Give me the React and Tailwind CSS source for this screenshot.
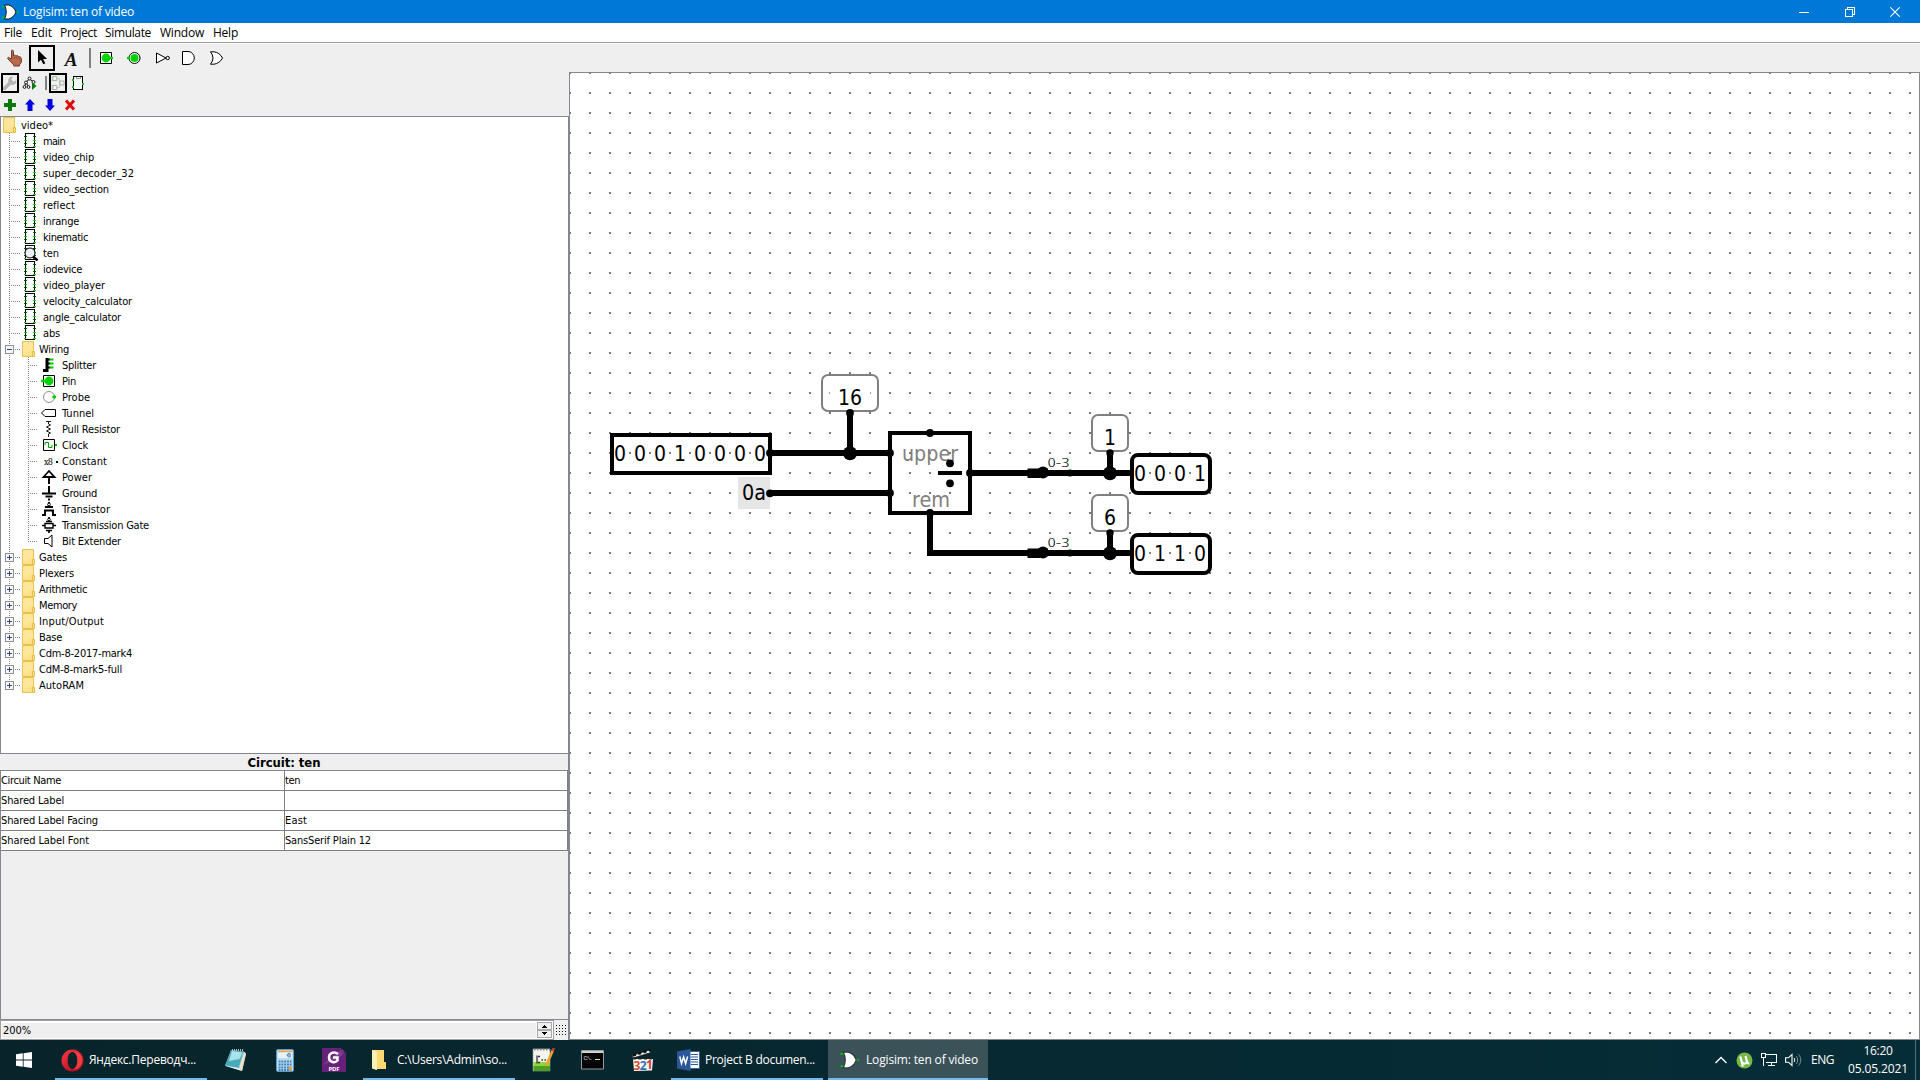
import React, { useLayoutEffect, useRef } from 'react';

const TAHOMA = "font-['DejaVu_Sans_Condensed','DejaVu_Sans',sans-serif] [font-stretch:condensed]";
const SEGOE = "font-['Open_Sans','Noto_Sans',sans-serif] font-medium";

// Text whose letter spacing is adjusted so that it takes the given width.
function Fit({ w, children, className = '' }) {
  const ref = useRef(null);
  useLayoutEffect(() => {
    const el = ref.current;
    el.style.letterSpacing = '0px';
    const natural = el.getBoundingClientRect().width;
    el.style.letterSpacing = `${(w - natural) / String(children).length}px`;
  }, [w, children]);
  return (
    <span ref={ref} className={`inline-block shrink-0 whitespace-pre ${className}`}>
      {children}
    </span>
  );
}

function Ico({ w, h, children, className = '', crisp }) {
  return (
    <svg width={w} height={h} viewBox={`0 0 ${w} ${h}`} fill="none" shapeRendering={crisp ? 'crispEdges' : 'auto'} className={`block shrink-0 ${className}`}>
      {children}
    </svg>
  );
}

/* ---------- title and menu ---------- */

function LogisimMark({ w = 18, h = 16, outline = '#111' }) {
  return (
    <svg width={w} height={h} viewBox="0 0 18 16" fill="none" className="block shrink-0">
      <path d="M1 2.500h4M1 13.500h4M14 8h3.500" stroke="#00c800" strokeWidth="1.500" />
      <path d="M3.500 1H7.500C11 1.600 13.600 4.400 15 8C13.600 11.600 11 14.400 7.500 15H3.500C5.800 10.500 5.800 5.500 3.500 1Z" fill="#fff" stroke={outline} strokeWidth="1" />
    </svg>
  );
}

function TitleBar() {
  return (
    <header className={`flex h-[23px] shrink-0 items-center bg-[#0078d7] text-white ${SEGOE}`}>
      <div className="ml-px flex w-[22px]"><LogisimMark /></div>
      <Fit w={111} className="pt-px text-[12px] leading-[22px]">Logisim: ten of video</Fit>
      <div className="ml-auto flex h-full items-center">
        <div className="flex w-[46px] justify-center"><Ico w={10} h={10} crisp><path d="M0 5.500h10" stroke="#fff" /></Ico></div>
        <div className="flex w-[45px] justify-center"><Ico w={10} h={10} crisp><path d="M.5 2.500h7v7h-7zM2.500 2V.5h7v7H8" stroke="#fff" /></Ico></div>
        <div className="mr-[2px] flex w-[46px] justify-center"><Ico w={10} h={10}><path d="M.3.3l9.400 9.400M9.700.3L.3 9.700" stroke="#fff" strokeWidth="1.100" /></Ico></div>
      </div>
    </header>
  );
}

const MENUS = [['File', 18, 27], ['Edit', 21, 29], ['Project', 37, 45], ['Simulate', 46, 55], ['Window', 44, 53], ['Help', 25, 30]];

function MenuBar() {
  return (
    <nav className={`flex h-[20px] shrink-0 items-center border-b border-[#a0a0a0] bg-white pl-1 text-[12px] leading-[19px] text-black ${SEGOE}`}>
      {MENUS.map(([label, w, cell]) => (
        <div key={label} className="shrink-0" style={{ width: cell }}><Fit w={w}>{label}</Fit></div>
      ))}
    </nav>
  );
}

/* ---------- toolbars ---------- */

function Tool({ children, on, className = '' }) {
  return (
    <div className={`flex h-[26px] w-[26px] shrink-0 items-center justify-center ${on ? 'border-2 border-black' : ''} ${className}`}>{children}</div>
  );
}

function SmallTool({ children, on }) {
  return (
    <div className={`flex h-[20px] w-[18px] shrink-0 items-center justify-center ${on ? 'border-2 border-black' : ''}`}>{children}</div>
  );
}

function MainToolbar() {
  return (
    <div className="flex h-[29px] shrink-0 items-start gap-[2px] border-t border-white bg-[#efefef] pl-px pt-px">
      <Tool className="pl-[2px]">
        <Ico w={18} h={18}>
          <path d="M5.500 1.500c1-.9 2 0 2 1V7l1-.8 1.500.8 1.300-.5 1.500 1.200 1.600.2 1 1.600v3.500l-2 3v1H7.800v-1L2 10c-.7-1-.2-1.700.7-1.600L5.500 10z" fill="#bd6b4c" stroke="#5e2f20" strokeWidth=".9" />
          <path d="M8.500 8v2M11 8v2M13.200 9v1.500" stroke="#713a29" strokeWidth=".7" />
        </Ico>
      </Tool>
      <Tool on>
        <Ico w={18} h={18}><path d="M5 1v12.500l3-2.800 2.300 4.600 2-1-2.200-4.400h4z" fill="#000" /></Ico>
      </Tool>
      <Tool className="pl-[2px]"><span className="pt-[2px] font-['Liberation_Serif',serif] text-[19px] font-bold italic leading-none text-[#111]">A</span></Tool>
      <Ico w={6} h={26} crisp><path d="M5 3v20" stroke="#808080" strokeWidth="2" /></Ico>
      <Tool>
        <Ico w={16} h={16}><path d="M2.500 2.500h11v11h-11z" fill="#fff" stroke="#000" /><circle cx="8" cy="8" r="4.400" fill="#00d200" /><path d="M12 8h3" stroke="#00d200" strokeWidth="2.400" /></Ico>
      </Tool>
      <Tool>
        <Ico w={16} h={16}><circle cx="8.500" cy="8" r="5.500" fill="#fff" stroke="#000" /><circle cx="8.500" cy="8" r="4" fill="#00d200" /><path d="M1 8h3" stroke="#00d200" strokeWidth="2.400" /></Ico>
      </Tool>
      <Tool>
        <Ico w={16} h={16}><path d="M2.500 3v10L12 8z" fill="#fff" stroke="#000" /><circle cx="13.700" cy="8" r="1.700" fill="#fff" stroke="#000" /></Ico>
      </Tool>
      <Tool className="pr-[2px]">
        <Ico w={16} h={16}><path d="M1.500 1.500H7a6.300 6.500 0 0 1 0 13H1.500z" fill="#fff" stroke="#000" /></Ico>
      </Tool>
      <Tool className="pr-[2px]">
        <Ico w={16} h={16}><path d="M1.500 1.800H5Q10.500 2.500 13.500 8Q10.500 13.500 5 14.200H1.500Q6.500 8 1.500 1.800Z" fill="#fff" stroke="#000" /></Ico>
      </Tool>
    </div>
  );
}

function ExplorerToolbars() {
  return (
    <div className="h-[44px] shrink-0 bg-[#efefef]">
      <div className="flex gap-[2px] pl-px pt-px">
        <SmallTool on>
          <Ico w={14} h={14}><path d="M1.500 12.500L7 7" stroke="#b4b4b4" strokeWidth="3.400" strokeLinecap="round" /><path d="M13.200 4.200L10.500 5.700 8.400 3.600 10 .8C6 0 4.500 3.500 5.500 6L8.200 8.700C11 9.500 14 7.500 13.200 4.200Z" fill="#b4b4b4" /></Ico>
        </SmallTool>
        <SmallTool>
          <Ico w={16} h={16}>
            <path d="M7.500 4L4 7M7.500 4L11 6.500M4 7L2.500 12M4 7L6.500 12" stroke="#000" strokeWidth=".9" />
            <g fill="#fff" stroke="#000" strokeWidth=".9"><circle cx="7.500" cy="3.500" r="1.500" /><circle cx="4" cy="7.500" r="1.500" /><circle cx="2.500" cy="12" r="1.400" /><circle cx="6.500" cy="12" r="1.400" /><circle cx="11.500" cy="7" r="1.500" /></g>
            <path d="M10 7v8l4.500-4z" fill="#0a7a14" />
          </Ico>
        </SmallTool>
        <Ico w={6} h={20} crisp><path d="M5 3v14" stroke="#808080" strokeWidth="2" /></Ico>
        <SmallTool on>
          <Ico w={14} h={16}>
            <path d="M6 3.500h2.500V8M6 12.500h2.500V8M0 2h2M0 5h2M0 11h2M0 14h2" stroke="#a6dba6" />
            <path d="M1.800 1.500h4v4h-4zM1.800 10.500h4v4h-4zM9 6h4v4H9z" fill="#f4f4f4" stroke="#aaa" />
          </Ico>
        </SmallTool>
        <SmallTool>
          <Ico w={14} h={16} crisp><path d="M2.500 1.500h9v13h-9z" fill="#fff" stroke="#000" /><path d="M5 2v1h4V2" stroke="#999" /><path d="M1 4.500h2M1 11.500h2M11 8.500h2" stroke="#00c800" strokeWidth="2" /></Ico>
        </SmallTool>
      </div>
      <div className="flex gap-[2px] pl-px pt-[2px]">
        <SmallTool><Ico w={12} h={12} crisp><path d="M4 0h4v4h4v4H8v4H4V8H0V4h4z" fill="#0a780a" /></Ico></SmallTool>
        <SmallTool><Ico w={10} h={12}><path d="M5 0l5 5.500H7.500V12h-5V5.500H0z" fill="#0000e0" /></Ico></SmallTool>
        <SmallTool><Ico w={10} h={12}><path d="M5 12l5-5.500H7.500V0h-5v6.500H0z" fill="#0000e0" /></Ico></SmallTool>
        <SmallTool><Ico w={12} h={12} className="-ml-px"><path d="M2 1.500l8 9M10 1.500l-8 9" stroke="#dc0a0a" strokeWidth="3" /></Ico></SmallTool>
      </div>
    </div>
  );
}

/* ---------- explorer tree ---------- */

function Folder() {
  return (
    <Ico w={13} h={16}>
      <path d="M.5.5h11v15H.5z" fill="#ffe08a" stroke="#e9c24c" />
      <path d="M1 1h10v7L1 14z" fill="#ffe9a8" opacity=".6" />
      <path d="M10.500 10.500h2v5h-2z" fill="#ffe08a" stroke="#e2b93c" strokeWidth=".9" />
    </Ico>
  );
}

function Chip({ current }) {
  return (
    <Ico w={15} h={16} crisp>
      <path d="M1.500 .5h9v14h-9z" fill="#fff" stroke="#000" />
      <path d="M0 3.500h3M0 10.500h3M9 3.500h3M9 10.500h3" stroke="#005500" />
      <path d="M0 7.500h3M0 13.500h2M9 7.500h3M9 13.500h3" stroke="#00d200" />
      {current && (
        <g shapeRendering="auto"><circle cx="6" cy="8" r="5" fill="#eef0ff" stroke="#000" /><path d="M9 11.500l4.500 4" stroke="#000" strokeWidth="2.600" /></g>
      )}
    </Ico>
  );
}

const WIRING_ICONS = {
  Splitter: <><path d="M2 13.500h4V1" stroke="#000" strokeWidth="3" /><path d="M6 2.500h3M6 6.500h3M6 10.500h3" stroke="#000" strokeWidth="2" /><path d="M8.500 2.500h4M8.500 6.500h4M8.500 10.500h4" stroke="#00c800" strokeWidth="2" /></>,
  Pin: <><path d="M2.500 2.500h11v11h-11z" fill="#fff" stroke="#000" /><circle cx="8" cy="8" r="4.400" fill="#00d200" /><path d="M0 8h5" stroke="#00d200" strokeWidth="2.600" /></>,
  Probe: <><circle cx="8" cy="8" r="5.500" stroke="#909090" /><path d="M11.500 8h3.500M13.300 6.200v3.600" stroke="#00d200" strokeWidth="2" /></>,
  Tunnel: <path d="M.5 8L4 4.500h10.500v7H4z" stroke="#000" />,
  'Pull Resistor': <path d="M5 .5h5M7.500 1v2l2 1-4 2 4 2-4 2 4 2-2 1v3" stroke="#000" strokeWidth=".9" />,
  Clock: <><path d="M2.500 2.500h11v11h-11z" fill="#fff" stroke="#000" /><path d="M4 8V5.500h3.500v5H11V8" stroke="#00a000" /><path d="M14 8h2" stroke="#00c800" strokeWidth="2" /></>,
  Constant: <><text x="3" y="11.500" fontSize="9" textLength="9" fill="#000" className="font-['DejaVu_Serif',serif]">x8</text><path d="M15 9h2" stroke="#000" strokeWidth="2" /></>,
  Power: <><path d="M8 15V7" stroke="#000" strokeWidth="2" /><path d="M2.500 8L8 2l5.500 6z" fill="#fff" stroke="#000" strokeWidth="1.800" /></>,
  Ground: <path d="M8 1v8M1 8.500h14M4.500 11.500h7M7 14.500h2" stroke="#000" strokeWidth="2" />,
  Transistor: <><path d="M8 1v4M4 6h8M3 9.500h10M1 14h3v-4M15 14h-3v-4" stroke="#000" strokeWidth="1.900" /><circle cx="8" cy="3.500" r="1.400" fill="#fff" stroke="#000" /></>,
  'Transmission Gate': <><path d="M8 0v3M5 4.500h6M1 8.500h3M12 8.500h3M5 13.500h6M8 14v2" stroke="#000" strokeWidth="1.700" /><path d="M4 6.500h8v4.500H4z" fill="#fff" stroke="#000" strokeWidth="1.400" /><circle cx="8" cy="2.500" r="1.300" fill="#fff" stroke="#000" /></>,
  'Bit Extender': <path d="M3.500 5.500v5H7l4 3.500v-12L7 5.500z" stroke="#000" />,
};

// One 16px cell of connector lines: `elbow` draws the branch, `end` stops the trunk at the branch.
function Guide({ w, trunk, elbow, end, box }) {
  return (
    <Ico w={w} h={16} crisp>
      {trunk != null && <path d={`M${trunk + 0.5} 0v${end ? 8 : 16}`} stroke="#808080" strokeDasharray="1 1" />}
      {elbow && <path d={`M${trunk} 8.500H${w}`} stroke="#808080" strokeDasharray="1 1" />}
      {box && (
        <g>
          <path d={`M${trunk - 3.5} 4.500h8v8h-8z`} fill="#f6f6f6" stroke="#919191" />
          <path d={`M${trunk - 2} 8.500h5${box === '+' ? `M${trunk + 0.5} 6v5` : ''}`} stroke="#2c4a91" />
        </g>
      )}
    </Ico>
  );
}

const CIRCUITS = [['main', 22], ['video_chip', 51], ['super_decoder_32', 91], ['video_section', 66], ['reflect', 32], ['inrange', 36], ['kinematic', 45], ['ten', 16], ['iodevice', 39], ['video_player', 62], ['velocity_calculator', 89], ['angle_calculator', 78], ['abs', 17]];
const WIRING = [['Splitter', 34], ['Pin', 14], ['Probe', 28], ['Tunnel', 32], ['Pull Resistor', 58], ['Clock', 26], ['Constant', 45], ['Power', 30], ['Ground', 35], ['Transistor', 48], ['Transmission Gate', 87], ['Bit Extender', 59]];
const LIBS = [['Gates', 28], ['Plexers', 35], ['Arithmetic', 48], ['Memory', 38], ['Input/Output', 65], ['Base', 23], ['Cdm-8-2017-mark4', 93], ['CdM-8-mark5-full', 83], ['AutoRAM', 45]];

function Row({ children }) {
  return <div className="flex h-[16px] items-start">{children}</div>;
}

function Tree() {
  return (
    <div className={`h-[638px] shrink-0 border border-[#828790] bg-white text-[11px] leading-[18px] text-black ${TAHOMA}`}>
      <Row><div className="w-[20px] pl-[2px]"><Folder /></div><Fit w={32}>video*</Fit></Row>
      {CIRCUITS.map(([name, w]) => (
        <Row key={name}>
          <Guide w={20} trunk={8} elbow />
          <div className="ml-[3px] w-[19px]"><Chip current={name === 'ten'} /></div>
          <Fit w={w}>{name}</Fit>
        </Row>
      ))}
      <Row><Guide w={20} trunk={8} elbow box="-" /><div className="ml-px w-[17px]"><Folder /></div><Fit w={30}>Wiring</Fit></Row>
      {WIRING.map(([name, w], i) => (
        <Row key={name}>
          <Guide w={20} trunk={8} />
          <Guide w={17} trunk={7} elbow end={i === WIRING.length - 1} />
          <div className="ml-[3px] w-[21px]"><Ico w={18} h={16}>{WIRING_ICONS[name]}</Ico></div>
          <Fit w={w}>{name}</Fit>
        </Row>
      ))}
      {LIBS.map(([name, w], i) => (
        <Row key={name}><Guide w={20} trunk={8} elbow box="+" end={i === LIBS.length - 1} /><div className="ml-px w-[17px]"><Folder /></div><Fit w={w}>{name}</Fit></Row>
      ))}
    </div>
  );
}

/* ---------- attribute table ---------- */

const ATTRS = [['Circuit Name', 60, 'ten', 15], ['Shared Label', 63, '', 0], ['Shared Label Facing', 97, 'East', 22], ['Shared Label Font', 88, 'SansSerif Plain 12', 86]];

function Attributes() {
  return (
    <section className={`flex grow flex-col bg-[#efefef] text-black ${TAHOMA}`}>
      <div className="flex h-[16px] items-center justify-center border-r border-[#828790] text-[13px] font-bold leading-[18px]"><Fit w={73} className="pt-px">Circuit: ten</Fit></div>
      <div className="grow border border-[#828790]">
        {ATTRS.map(([k, kw, v, vw]) => (
          <div key={k} className="flex h-[20px] border-b border-r border-[#808080] bg-white text-[11px] leading-[20px]">
            <div className="w-[284px] border-r border-[#808080]"><Fit w={kw}>{k}</Fit></div>
            <div>{v && <Fit w={vw}>{v}</Fit>}</div>
          </div>
        ))}
      </div>
      <div className="flex h-[20px] shrink-0 border-r border-[#828790]">
        <div className="flex grow border border-[#a0a0a0] bg-white p-px pt-[2px]">
          <div className="grow bg-[#efefef] text-[11px] leading-[16px]"><Fit w={29} className="pl-px">200%</Fit></div>
          <Ico w={15} h={16} crisp className="-mt-px ml-px">
            <path d="M.5.5h14v7H.5zM.5 8.500h14v7H.5z" fill="#efefef" stroke="#a9a9a9" />
            <path d="M5 5.500h5M6 4.500h3M7 3.500h1M5 10.500h5M6 11.500h3M7 12.500h1" stroke="#000" />
          </Ico>
        </div>
        <Ico w={14} h={20} crisp>
          {[0, 1, 2, 3].map((r) => <path key={r} d={`M2 ${5.5 + r * 3}h11`} stroke="#111" strokeDasharray="1 2" />)}
        </Ico>
      </div>
    </section>
  );
}

/* ---------- circuit canvas ---------- */

function Label({ x, y, w, size = 21, fill = '#000', className, children }) {
  return (
    <text x={x} y={y} textAnchor="middle" fontSize={size} fill={fill} textLength={w} lengthAdjust="spacingAndGlyphs" className={className}>{children}</text>
  );
}

function Bits({ x, y, bits }) {
  return bits.split('').map((b, i) => (
    <g key={i}>
      <Label x={x + i * 20} y={y}>{b}</Label>
      {i < bits.length - 1 && <path d={`M${x + i * 20 + 9} ${y - 7.5}h2`} stroke="#808080" strokeWidth="2" shapeRendering="crispEdges" />}
    </g>
  ));
}

function OutputRow({ dy, value, bits }) {
  return (
    <g transform={`translate(0 ${dy})`}>
      <path d="M1040 473h92M1110 450v23" stroke="#000" strokeWidth="6" shapeRendering="crispEdges" />
      <path d="M1027.500 468.500H1040V478H1027.500z" fill="#000" />
      <circle cx="1043" cy="472.500" r="6" /><circle cx="1070" cy="473" r="3.600" /><circle cx="1110" cy="473.300" r="7" />
      <Label x={1058.5} y={467} w={22} size={13} className="font-['Open_Sans','Noto_Sans',sans-serif] font-light">0-3</Label>
      <rect x="1092" y="415" width="36" height="36" rx="6" fill="#fff" stroke="#808080" strokeWidth="2" />
      <circle cx="1110" cy="453" r="3.700" />
      <Label x={1110} y={444.5}>{value}</Label>
      <rect x="1132" y="455" width="78" height="38" rx="6" fill="#fff" stroke="#000" strokeWidth="4" />
      <Bits x={1140} y={480.5} bits={bits} />
    </g>
  );
}

function Canvas() {
  return (
    <main className="h-[968px] grow border border-[#828790] bg-white">
      <svg width="1349" height="966" viewBox="570 73 1349 966" className={`block ${TAHOMA}`}>
        <defs>
          <pattern id="grid" x="569" y="72" width="20" height="20" patternUnits="userSpaceOnUse">
            <rect width="2" height="2" fill="#777" shapeRendering="crispEdges" />
          </pattern>
        </defs>
        <rect x="570" y="73" width="1349" height="966" fill="url(#grid)" />

        <rect x="612" y="435" width="158" height="38" fill="#fff" stroke="#000" strokeWidth="4" shapeRendering="crispEdges" />
        <Bits x={620} y={460.5} bits="00010000" />
        <rect x="738" y="477" width="32" height="32" fill="#e6e6e6" />
        <Label x={754} y={500} w={24}>0a</Label>

        <path d="M770 453h120M770 493h120M850 410v43M970 473h60M930 513v40h100" stroke="#000" strokeWidth="6" fill="none" shapeRendering="crispEdges" />
        <rect x="822" y="375" width="56" height="36" rx="6" fill="#fff" stroke="#808080" strokeWidth="2" />
        <path d="M829.500 392v2M870.500 392v2" stroke="#999" />
        <Label x={850} y={404.5} w={24}>16</Label>
        <rect x="890" y="433" width="80" height="80" fill="none" stroke="#000" strokeWidth="4" shapeRendering="crispEdges" />
        <Label x={930} y={460.5} w={56} size={22} fill="#808080">upper</Label>
        <Label x={931} y={506.5} w={38} size={22} fill="#808080">rem</Label>
        <path d="M938 473h24" stroke="#000" strokeWidth="4" shapeRendering="crispEdges" />
        <circle cx="850" cy="453.300" r="7" />
        {[[770, 453], [770, 493.3], [850, 413], [890, 453], [890, 493], [930, 433], [930, 513], [970, 473], [950, 463.3], [950, 483.3]].map(([x, y]) => (
          <circle key={`${x}-${y}`} cx={x} cy={y} r="3.900" />
        ))}
        <OutputRow dy={0} value="1" bits="0001" />
        <OutputRow dy={80} value="6" bits="0110" />
      </svg>
    </main>
  );
}

/* ---------- taskbar ---------- */

function TaskItem({ icon, label, w, on, width, pad, gap }) {
  return (
    <div className={`flex h-[40px] shrink-0 items-center border-b-2 border-[#76b9ed] pt-[2px] ${on ? 'bg-[#3b5259]' : ''}`} style={{ width, paddingLeft: pad, columnGap: gap }}>
      {icon}
      <Fit w={w}>{label}</Fit>
    </div>
  );
}

function Taskbar() {
  return (
    <footer className={`flex h-[40px] shrink-0 bg-gradient-to-r from-[#08242a] to-[#052d38] text-[12px] leading-[18px] text-white ${SEGOE}`}>
      <div className="flex w-[55px] items-center pl-[16px]">
        <Ico w={16} h={16}><path d="M0 2.300l6.800-1v6.200H0zM7.600 1.200L16 0v7.500H7.600zM0 8.400h6.800v6.300L0 13.700zM7.600 8.400H16V16l-8.400-1.200z" fill="#fff" /></Ico>
      </div>
      <TaskItem width={152} pad={6} gap={5} w={107} label="Яндекс.Переводч..." icon={
        <Ico w={23} h={23}><defs><linearGradient id="op" x1="0" y1="0" x2="1" y2="1"><stop stopColor="#ff3b45" /><stop offset="1" stopColor="#a70014" /></linearGradient></defs><path fillRule="evenodd" d="M11.500.5a11 11 0 1 0 0 22 11 11 0 1 0 0-22zM11.500 3c3 0 4.800 3.700 4.800 8.500S14.500 20 11.500 20s-4.800-3.700-4.800-8.500S8.500 3 11.500 3z" fill="url(#op)" /><path d="M12 3c6-1 9.500 4 9.500 8.500S18 21 12 20c3-.5 4.300-4 4.300-8.500S15 3.500 12 3z" fill="#ff4b4b" opacity=".75" /></Ico>
      } />
      <div className="flex w-[52px] items-center justify-end pr-[12px]">
        <Ico w={23} h={24}><path d="M7 2l13 1.500 2 2-4 17.500L1 18z" fill="#7ec3d0" /><path d="M7.500 2L19 3.500 14.500 20 1 17.500z" fill="#4aa9bb" /><path d="M8 3l10.500 1.500-3 6.500L5 13z" fill="#a9e2e8" /><path d="M20 4l2 2-4 17-3-3z" fill="#e7e1c8" /><path d="M1 17.500L14.500 20l3.500 3z" fill="#dff3f5" /><path d="M8 2h12" stroke="#b8b8b8" strokeDasharray="1 1" strokeWidth="2" /></Ico>
      </div>
      <div className="flex w-[52px] items-center justify-center">
        <Ico w={18} h={23}><rect x=".5" y=".5" width="17" height="22" rx="1.500" fill="#b9dcf0" stroke="#5b9ac4" /><path d="M2 2h14v7H2z" fill="#e4f3fb" /><path d="M2 2.500h14" stroke="#f0a238" strokeWidth="1.500" /><path d="M11.500 6h3.500M14.500 5c-2-1.500-4 .5-3 2.200 1 1 2.500.8 3.300 0" stroke="#3a6ea5" /><path d="M2.500 12.500h13M2.500 15.500h13M2.500 18.500h13M2.500 21h13" stroke="#4484b8" strokeWidth="2" strokeDasharray="2 .8" /><path d="M13 18h3v3.500h-3z" fill="#f0a238" /></Ico>
      </div>
      <div className="flex w-[52px] items-center pl-[11px]">
        <Ico w={24} h={24}><path d="M0 0h19l5 5v19H0z" fill="#68217a" /><path d="M19 0v5h5z" fill="#2e0e38" /><path d="M0 17L20 1l3 3-8 8z" fill="#8a4b9a" opacity=".7" /><path d="M16 6c-4-3-9-1-9 3.500 0 4.800 6 6 8.500 3V9.500H11" stroke="#fff" strokeWidth="2.500" /><text x="6.500" y="22.500" fontSize="6" fontWeight="bold" fill="#fff" textLength="11">PDF</text></Ico>
      </div>
      <TaskItem width={152} pad={9} gap={10} w={110} label="C:\Users\Admin\so..." icon={
        <Ico w={15} h={20}><path d="M0 0h5v20l-5-2z" fill="#f9e79f" /><path d="M3 0h9v12h2v7H5V3z" fill="#fbd972" /><path d="M0 0l5 2.500V20l-5-1.500z" fill="#fff0b5" /></Ico>
      } />
      <div className="flex w-[52px] items-center justify-center pl-[4px]">
        <Ico w={23} h={24}><path d="M1 1h17v22H1z" fill="#f3f5ec" stroke="#999" strokeWidth=".6" /><path d="M1.500 14h16.500v9H1.500z" fill="#8ed43c" /><path d="M1.500 18h16.500v5H1.500z" fill="#4aa024" /><path d="M2 1.500h16" stroke="#888" strokeDasharray="1.500 1.500" strokeWidth="2" /><path d="M5 7.500v8M6 8.500h2M6 14.500h2M9.500 12h1.500M12.500 12h1.500" stroke="#333" strokeWidth="1.300" /><path d="M21 2l-7 16" stroke="#eaa22e" strokeWidth="2.600" /><path d="M21.800 0l-1.200 3" stroke="#c0392b" strokeWidth="2.600" /></Ico>
      </div>
      <div className="flex w-[50px] items-center justify-center">
        <Ico w={23} h={20}><path d="M.5.5h22v18.500H.5z" fill="#050505" stroke="#9a9a9a" /><path d="M1 2h21" stroke="#d0d0d0" strokeWidth="2" /><text x="2.500" y="9.500" fontSize="6" fill="#ddd" textLength="9" className="font-['Liberation_Mono',monospace]">C:\.</text><path d="M14 9.500h5" stroke="#ddd" /></Ico>
      </div>
      <div className="flex w-[54px] items-center justify-center pr-[4px]">
        <Ico w={23} h={24}><path d="M2 11h20l-1 11.500L3 23z" fill="#f6f6f6" /><path d="M1 7.500L19 2l.8 2.500L2 10z" fill="#fff" stroke="#111" strokeWidth=".7" /><path d="M2 7.500l18-5.500" stroke="#111" strokeWidth="2.500" strokeDasharray="3 2.500" /><path d="M2 10.500h19" stroke="#222" strokeWidth="2" strokeDasharray="3 2.500" /><g fontSize="12" fontWeight="bold"><text x="2.500" y="21.500" fill="#d8502a">3</text><text x="8.800" y="21.500" fill="#2f6db8">2</text><text x="15" y="21" fill="#cf3a2a">1</text></g></Ico>
      </div>
      <TaskItem width={152} pad={6} gap={5} w={110} label="Project B documen..." icon={
        <Ico w={23} h={22}><path d="M12 2.500h10.500v17H12z" fill="#fff" stroke="#2b579a" strokeWidth=".8" /><path d="M14 5.500h7M14 8h7M14 10.500h7M14 13h7M14 15.500h7" stroke="#2b579a" strokeWidth="1.200" /><path d="M0 2.500L13.500 0v22L0 19.500z" fill="#2b579a" /><path d="M2.800 7.500L4.500 14.500 6.600 8l2 6.500 2-7" stroke="#fff" strokeWidth="1.500" /></Ico>
      } />
      <div className="w-[5px]" />
      <TaskItem on width={160} pad={10} gap={5} w={112} label="Logisim: ten of video" icon={<LogisimMark w={23} h={18} outline="#2a3a40" />} />
      <div className="ml-auto flex items-center">
        <Ico w={12} h={8}><path d="M.5 7L6 1.500 11.500 7" stroke="#fff" strokeWidth="1.300" /></Ico>
        <Ico w={17} h={17} className="ml-[9px]"><circle cx="8.500" cy="8.500" r="8" fill="#74b943" /><path d="M4.300 4.500l1.500 5.500c.8 2 3.500 2 4.500.5M9.500 4l1.800 7 2 .3M5.500 9l1.200 5.500" stroke="#fff" strokeWidth="2.200" /></Ico>
        <Ico w={17} h={14} className="ml-[8px]" crisp><path d="M4.500 1.500h11v8h-11M10.500 10v3M7 12.500h7M.5.500h4v4h-4zM2.500 5v8" stroke="#fff" /></Ico>
        <Ico w={17} h={14} className="ml-[7px]"><path d="M.6 4.800h2.800L7 1.500v11L3.400 9.200H.6z" stroke="#fff" strokeWidth="1.100" /><path d="M9 5c1 1.300 1 2.700 0 4" stroke="#fff" /><path d="M11.200 3.200c2 2.300 2 5.300 0 7.600M13.500 1.300c3 3.500 3 7.900 0 11.400" stroke="#7d949b" /></Ico>
        <Fit w={23} className="ml-[9px]">ENG</Fit>
        <div className="ml-[13px] flex w-[62px] flex-col items-center">
          <Fit w={29}>16:20</Fit>
          <Fit w={60}>05.05.2021</Fit>
        </div>
        <div className="ml-[6px] mr-[4px] h-[40px] w-px bg-[#53707a]" />
      </div>
    </footer>
  );
}

export default function App() {
  return (
    <div className="flex h-[1080px] w-[1920px] flex-col overflow-hidden bg-[#efefef]">
      <TitleBar />
      <MenuBar />
      <MainToolbar />
      <div className="flex h-[968px] shrink-0">
        <aside className="flex w-[569px] shrink-0 flex-col">
          <ExplorerToolbars />
          <Tree />
          <Attributes />
        </aside>
        <Canvas />
      </div>
      <Taskbar />
    </div>
  );
}
